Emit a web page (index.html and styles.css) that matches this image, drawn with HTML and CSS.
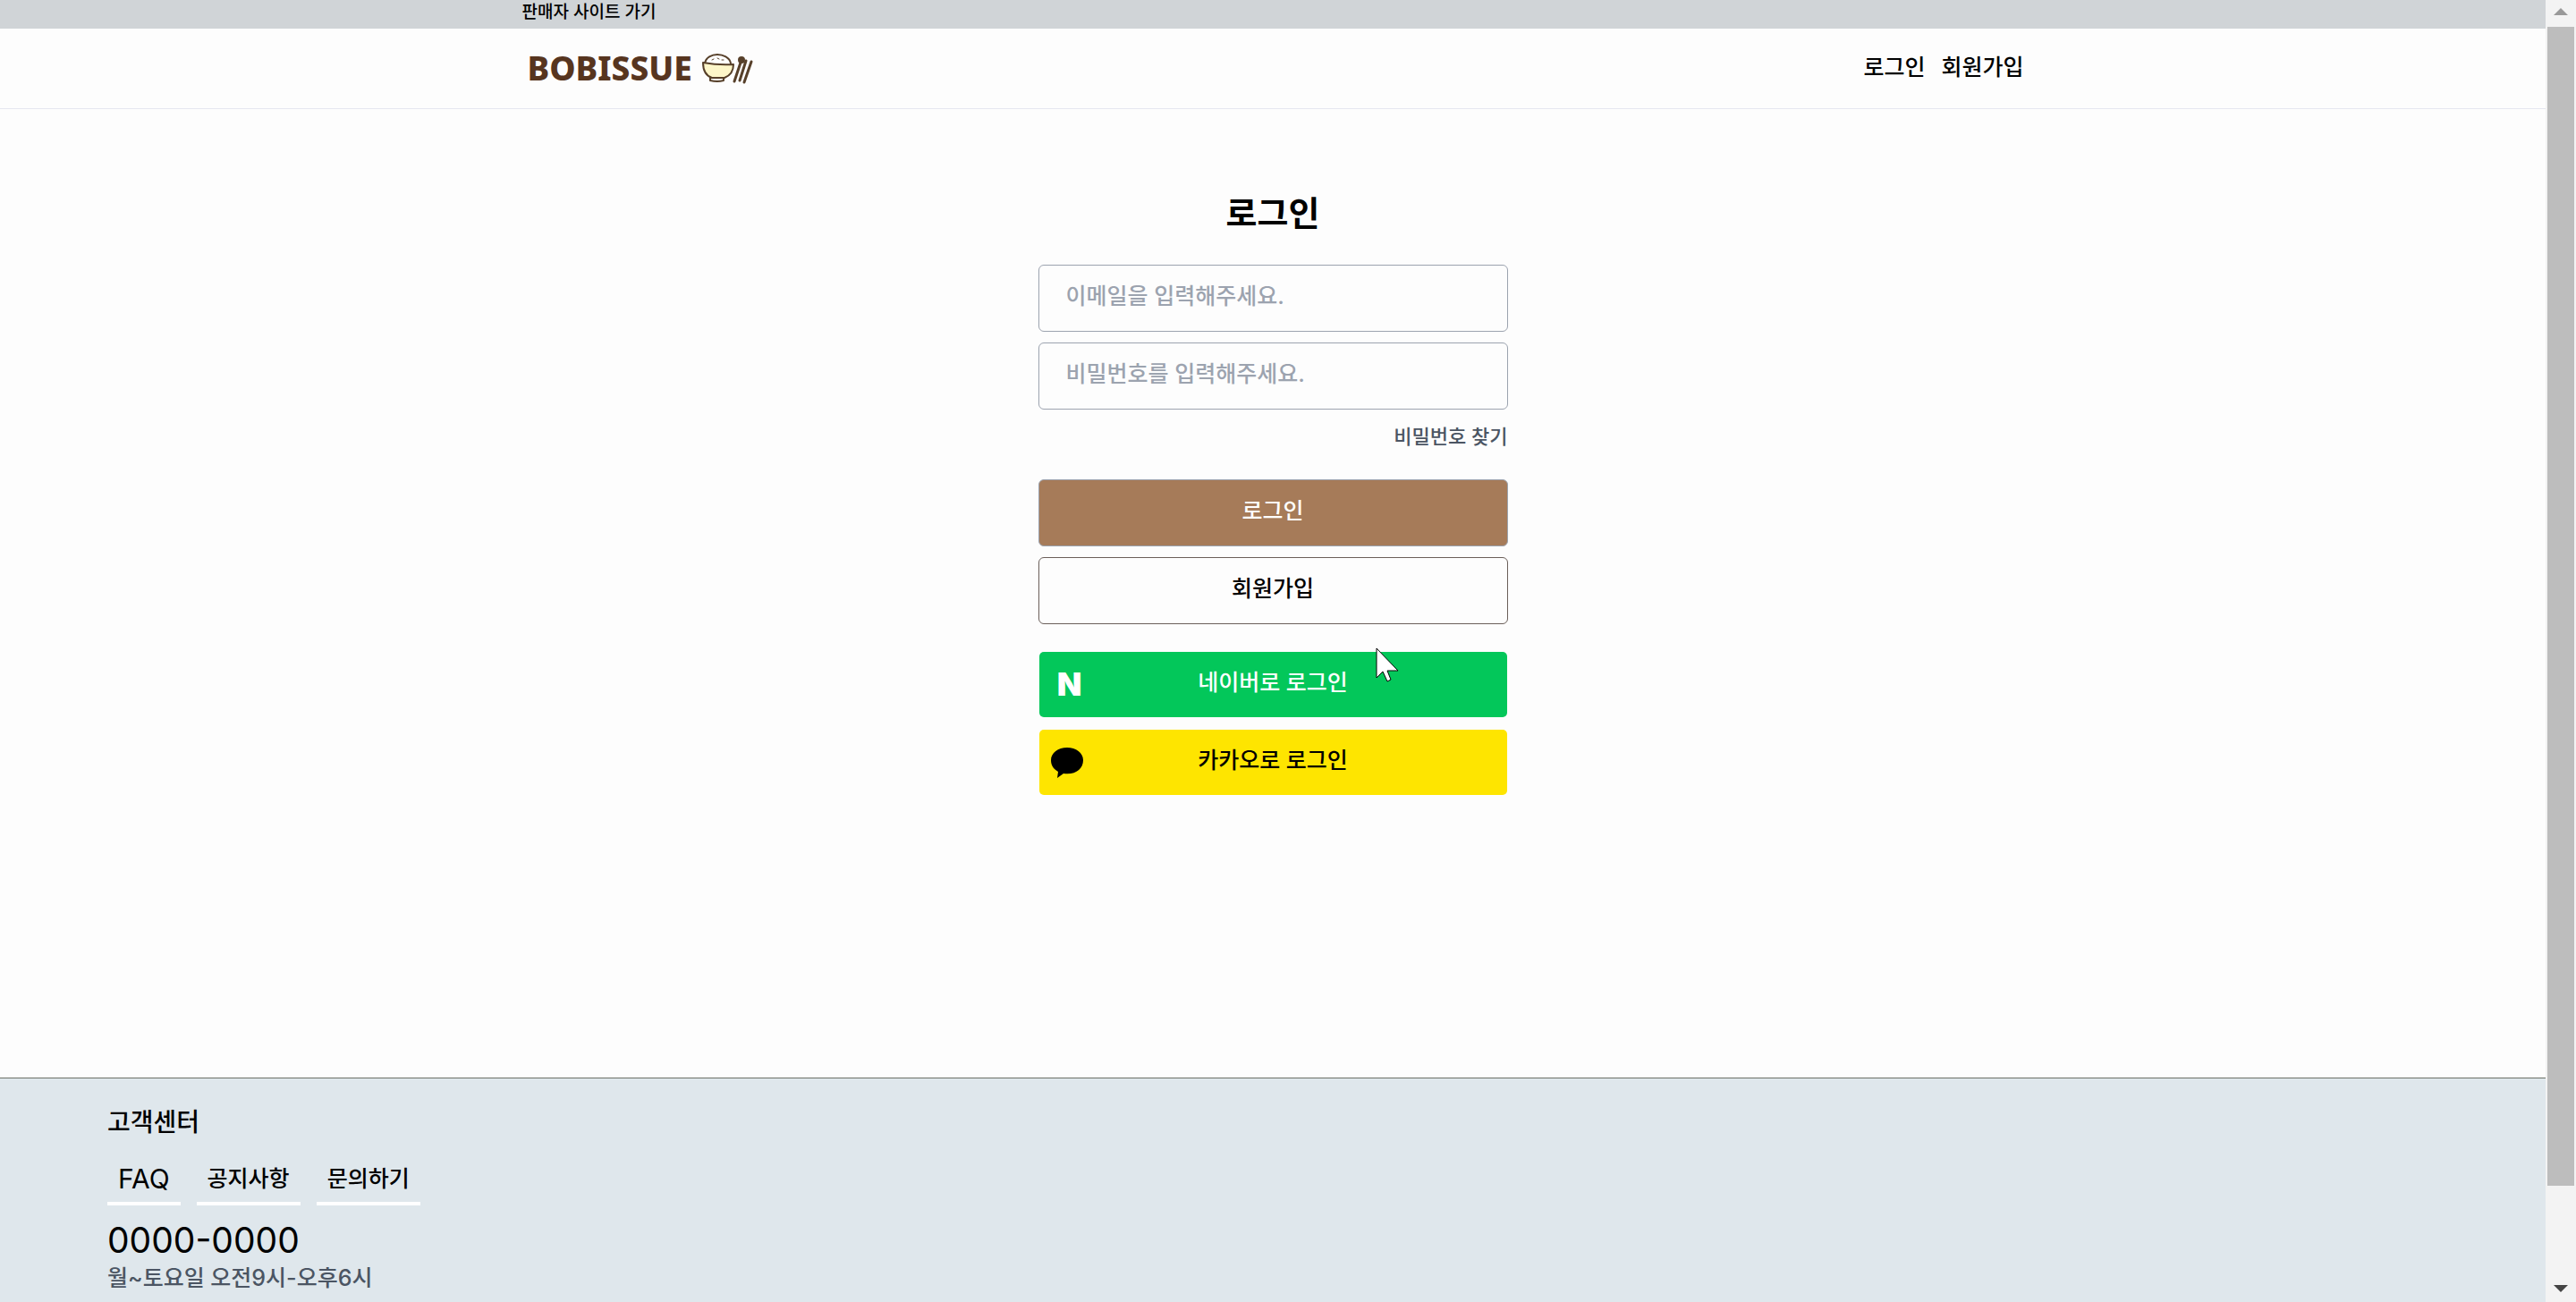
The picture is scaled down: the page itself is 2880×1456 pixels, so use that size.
FILE: index.html
```html
<!DOCTYPE html>
<html lang="ko">
<head>
<meta charset="utf-8">
<meta name="viewport" content="width=device-width, initial-scale=1">
<title>BOBISSUE</title>
<link rel="stylesheet" href="styles.css">
</head>
<body>
<div class="page">
  <div class="topbar"><div class="container"><a href="#">판매자 사이트 가기</a></div></div>
  <header class="header">
    <div class="container header-row">
      <a class="logo" href="#">
        <span>BOBISSUE</span>
        <svg class="logo-bowl" viewBox="0 0 60 36" aria-hidden="true">
          <path class="rice" d="M4 12C5 5 12 2 18 2S32 5 33 12"/>
          <path class="bowl" d="M2 11Q19 14 36 13C36 22 31 26 26 28H12C6 26 2 21 2 11Z"/>
          <path class="rice" d="M10 28V31Q18 33 25 31V28Z"/>
          <path class="grain" d="M12 8l2-1M18 6l2 1M23 8l2 0"/>
          <path class="stick" d="M37 32L44 11M43 31L50 9M48 33L56 10"/>
          <ellipse class="spoon" cx="45" cy="8" rx="3" ry="3"/>
        </svg>
      </a>
      <nav class="nav"><a href="#">로그인</a><a href="#">회원가입</a></nav>
    </div>
  </header>
  <main class="main">
    <form class="login">
      <h1>로그인</h1>
      <input class="field" type="email" aria-label="이메일" placeholder="이메일을 입력해주세요.">
      <input class="field" type="password" aria-label="비밀번호" placeholder="비밀번호를 입력해주세요.">
      <a class="find" href="#">비밀번호 찾기</a>
      <button class="btn primary" type="button">로그인</button>
      <button class="btn outline" type="button">회원가입</button>
      <button class="btn naver" type="button"><span class="brand brand-n" aria-hidden="true">N</span>네이버로 로그인</button>
      <button class="btn kakao" type="button"><svg class="brand" viewBox="0 0 36 38" aria-hidden="true"><path d="M18 1C8 1 0 7 0 15C0 21 3 25 8 28L7 35L14 30C27 32 36 25 36 15C36 7 28 1 18 1Z"/></svg>카카오로 로그인</button>
    </form>
  </main>
  <footer class="footer">
    <h2>고객센터</h2>
    <nav class="tabs"><a class="latin" href="#">FAQ</a><a href="#">공지사항</a><a href="#">문의하기</a></nav>
    <p class="phone">0000-0000</p>
    <p class="hours">월~토요일 오전9시-오후6시</p>
  </footer>
</div>
<div class="scrollbar" aria-hidden="true">
  <svg class="arrow up" viewBox="0 0 16 8"><path d="M0 8L8 0L16 8Z"/></svg>
  <div class="track"><div class="thumb"></div></div>
  <svg class="arrow" viewBox="0 0 16 8"><path d="M0 0L8 8L16 0Z"/></svg>
</div>
<svg class="cursor" viewBox="0 0 26 40" aria-hidden="true"><path d="M1 1V34L8 27L13 38L17 36L13 26H25Z"/></svg>
</body>
</html>
```
FILE: styles.css
```css
* { box-sizing: border-box; }
body {
  margin: 0;
  display: flex;
  min-height: 100vh;
  background: #fdfdfd;
  color: #000;
  font-family: "Inter", "Noto Sans CJK KR", sans-serif;
  font-size: 25px;
  font-weight: 500;
  line-height: 36px;
}
a { color: inherit; text-decoration: none; }
h1, h2, p { margin: 0; }
.page { flex: 1; min-width: 0; display: flex; flex-direction: column; }
.container { width: 59%; margin: 0 auto; }
.topbar { background: #d0d4d7; font-size: 19px; line-height: 28px; padding-bottom: 4px; }
.header { border-bottom: 1px solid #e5e7f0; }
.header-row { height: 89px; display: flex; align-items: center; justify-content: space-between; }
.logo { display: flex; align-items: center; gap: 10px; padding-left: 6px; font-family: "Noto Sans", sans-serif; font-size: 37px; font-weight: 800; color: #57351f; }
.logo span { padding-bottom: 2px; }
.logo-bowl { width: 60px; height: 36px; fill: none; stroke: #57402a; stroke-width: 2; stroke-linejoin: round; stroke-linecap: round; }
.rice { fill: #fff; }
.bowl { fill: #fdf6c9; }
.grain { stroke-width: 1; }
.stick { stroke-width: 3; }
.spoon { fill: #57402a; }
.nav { display: flex; gap: 18px; padding-bottom: 4px; }
.main { flex: 1; padding: 92px 24px; }
.login { width: 100%; max-width: 525px; margin: 0 auto; display: flex; flex-direction: column; gap: 12px; }
h1 { font-size: 38px; font-weight: 700; line-height: 48px; text-align: center; margin-bottom: 22px; }
.field, .btn { width: 100%; height: 75px; border: 1px solid #9ca3af; border-radius: 6px; padding: 0 30px 6px; font: inherit; color: #000; background: transparent; }
.field::placeholder { color: #9ca3af; opacity: 1; }
.find { align-self: flex-end; font-size: 22px; color: #4b5563; margin-bottom: 18px; }
.btn { position: relative; text-align: center; }
.primary { background: #a67b59; color: #fff; }
.outline { border-color: #6b5f5a; margin-bottom: 18px; }
.naver { background: #03c75a; background-clip: padding-box; border-color: transparent; color: #fff; }
.kakao { background: #fee500; background-clip: padding-box; border-color: transparent; }
.brand { position: absolute; left: 13px; top: 19px; width: 36px; height: 38px; }
.brand-n { left: 16px; top: 17px; font-size: 36px; font-weight: 900; line-height: 38px; }
.footer { border-top: 1px solid #6b7068; background: #dfe7ec; padding: 31px 120px 9px; }
h2 { font-size: 28px; font-weight: 500; line-height: 36px; }
.tabs { display: flex; gap: 18px; margin-top: 27px; }
.tabs a { padding: 0 12px 8px; border-bottom: 4px solid #fff; }
.tabs .latin { font-size: 30px; font-weight: 400; }
.phone { font-size: 39px; font-weight: 400; line-height: 48px; margin-top: 15px; }
.hours { color: #4b5563; }
.scrollbar { position: sticky; top: 0; width: 34px; height: 100vh; padding: 9px 2px 11px; display: flex; flex-direction: column; align-items: center; gap: 13px; background: #f3f3f3; }
.arrow { width: 16px; height: 8px; fill: #444; }
.up { fill: #999; }
.track { flex: 1; width: 100%; }
.thumb { height: 93%; background: #bdbdbd; }
.cursor { position: absolute; left: 1538px; top: 724px; width: 26px; height: 40px; fill: #fff; stroke: #000; stroke-width: 1; }
```
